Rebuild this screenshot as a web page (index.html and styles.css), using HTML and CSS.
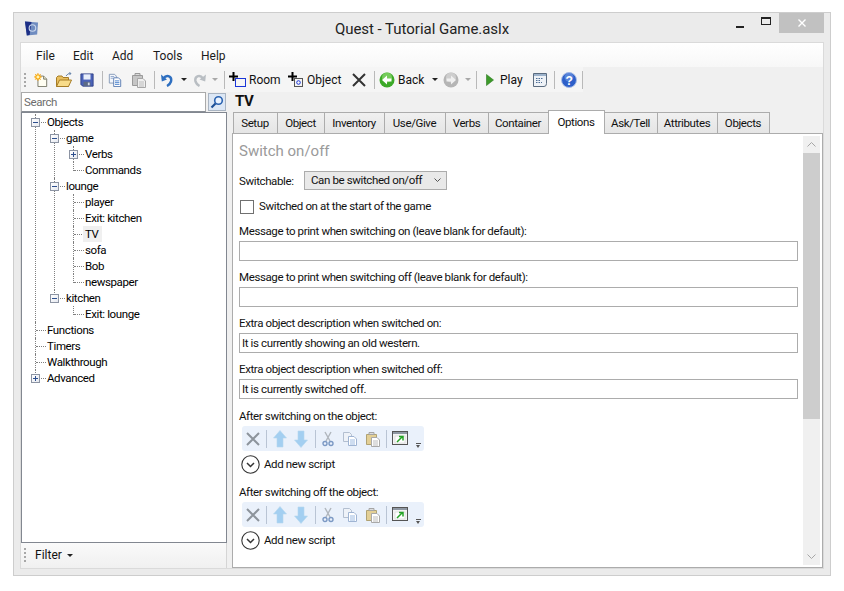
FILE: index.html
```html
<!DOCTYPE html>
<html lang="en">
<head>
<meta charset="utf-8">
<title>Quest - Tutorial Game.aslx</title>
<link rel="stylesheet" href="styles.css">
</head>
<body>
<svg class="sprite" width="0" height="0" aria-hidden="true">
  <defs>
    <symbol id="i-app" viewBox="0 0 16 16"><path d="M1 1 L15 2 L14 15 L3 16 Z" fill="#6f8cc0"/><path d="M1 1 L8 1.500 L6 15.500 L3 16 Z" fill="#1d2f86"/><circle cx="9" cy="8" r="3.500" fill="none" stroke="#c9d6ec" stroke-width="1.200"/></symbol>
    <symbol id="i-new" viewBox="0 0 16 16"><path d="M4.500 3.500H11L14.500 7V15.500H4.500Z" fill="#fffef2" stroke="#6d6d5c"/><path d="M11 3.500V7H14.500" fill="#e9e6c9" stroke="#6d6d5c"/><circle cx="4.500" cy="4.500" r="3.200" fill="#ffc21c"/><path d="M4.500 0V9M0 4.500H9M1.300 1.300L7.700 7.700M7.700 1.300L1.300 7.700" stroke="#f39a12"/><circle cx="4.500" cy="4.500" r="1.700" fill="#fff4b8"/></symbol>
    <symbol id="i-open" viewBox="0 0 16 16"><path d="M.5 14.500V5.500L2 4H6L7 5.500H12.500V14.500Z" fill="#e9bf5e" stroke="#a67c26"/><path d="M.5 14.500L3.500 8H15.500L12.500 14.500Z" fill="#f8dc8a" stroke="#a67c26"/><path d="M10 4Q11.500 1 15 1.500M15 1.500L13.300 .3M15 1.500L13.500 3" fill="none" stroke="#6a87ad"/></symbol>
    <symbol id="i-save" viewBox="0 0 16 16"><path d="M1 1H15V15H3L1 13Z" fill="#4a62b8" stroke="#2f3f86"/><rect x="4" y="1.500" width="8" height="6" fill="#e8eefa"/><rect x="4" y="10" width="8" height="5" fill="#5c6a86"/><rect x="9" y="11" width="2" height="3" fill="#d4dbea"/></symbol>
    <symbol id="i-copy" viewBox="0 0 16 16"><path d="M1.500 1.500H7.500L9.500 3.500V11.500H1.500Z" fill="#f4f7fc" stroke="#7f93b3"/><path d="M6.500 5.500H12L14.500 8V15.500H6.500Z" fill="#fff" stroke="#4f74ae"/><path d="M8 9H13M8 11H13M8 13H13" stroke="#3f79c8"/><path d="M3 4H7M3 6H6" stroke="#8aa2c8"/></symbol>
    <symbol id="i-paste-off" viewBox="0 0 16 16"><path d="M1.500 3.500H11.500V13.500H1.500Z" fill="#c6c6c6" stroke="#9a9a9a"/><path d="M4 3.500V1.500H9V3.500Z" fill="#dcdcdc" stroke="#999"/><path d="M6.500 6.500H12L14.500 9V15.500H6.500Z" fill="#efefef" stroke="#a6a6a6"/><path d="M8 10H13M8 12H13M8 14H13" stroke="#bdbdbd"/></symbol>
    <symbol id="i-undo" viewBox="0 0 12 14"><path d="M2.500 5.500Q4.500 2.500 7.500 3.200Q11 4.500 10 8.500Q9 11.500 6 13" fill="none" stroke="#2e6fc0" stroke-width="2.400"/><path d="M0 1.500L.8 8.500L6 6.500Z" fill="#2e6fc0"/></symbol>
    <symbol id="i-redo" viewBox="0 0 14 14"><path d="M11 5.500Q9 2.500 6 3.200Q2.500 4.500 3.500 8.500Q4.500 11.500 7.500 13" fill="none" stroke="#b9bec3" stroke-width="2.400"/><path d="M14 1.500L13.200 8.500L7.500 6.500Z" fill="#b9bec3"/></symbol>
    <symbol id="i-room" viewBox="0 0 17 16"><path d="M4.500 0V9M0 4.500H9" stroke="#000" stroke-width="2"/><rect x="6.500" y="6.500" width="10" height="8" fill="none" stroke="#1a35d8"/></symbol>
    <symbol id="i-obj" viewBox="0 0 17 16"><path d="M4.500 0V9M0 4.500H9" stroke="#000" stroke-width="2"/><rect x="6.500" y="6.500" width="8" height="8" fill="none" stroke="#555"/><circle cx="10.500" cy="10.500" r="1.800" fill="none" stroke="#1a35d8"/></symbol>
    <symbol id="i-x" viewBox="0 0 14 14"><path d="M1 1L13 13M13 1L1 13" stroke="#333" stroke-width="2"/></symbol>
    <symbol id="i-back" viewBox="0 0 16 16"><circle cx="8" cy="8" r="7.500" fill="#3ca928"/><circle cx="8" cy="5.500" r="5" fill="#8ddc6f" opacity=".7"/><path d="M3 8L8 3.500V6.500H12.500V9.500H8V12.500Z" fill="#fff"/></symbol>
    <symbol id="i-fwd" viewBox="0 0 16 16"><circle cx="8" cy="8" r="7.500" fill="#b5b5b5"/><circle cx="8" cy="5.500" r="5" fill="#d8d8d8" opacity=".7"/><path d="M13 8L8 3.500V6.500H3.500V9.500H8V12.500Z" fill="#f0f0f0"/></symbol>
    <symbol id="i-play" viewBox="0 0 8 12"><path d="M.5 .5L7.500 6L.5 11.500Z" fill="#3d9a2a" stroke="#2b7a20" stroke-width=".6"/></symbol>
    <symbol id="i-list" viewBox="0 0 16 16"><path d="M1.500 1.500H14.500V11.500Q14.500 14.500 12 14.500H1.500Z" fill="#eef2f7" stroke="#5b6c80"/><path d="M2 2H14V4H2Z" fill="#9db3cc"/><path d="M4 6.500H11M4 8.500H9M4 10.500H10" stroke="#4f6f96" stroke-dasharray="1.500 1"/></symbol>
    <symbol id="i-help" viewBox="0 0 16 16"><circle cx="8" cy="8" r="7.500" fill="#2d5fc9" stroke="#a9bde6"/><circle cx="8" cy="5" r="4.500" fill="#7fa6ea" opacity=".5"/><text x="8" y="12.500" text-anchor="middle" class="svg-q">?</text></symbol>
    <symbol id="i-search" viewBox="0 0 14 14"><circle cx="8.500" cy="5.500" r="3.800" fill="#eaf3ff" stroke="#2a62b0" stroke-width="1.600"/><path d="M5.500 8.500L1.500 12.500" stroke="#1c4f96" stroke-width="2.200"/></symbol>
    <symbol id="i-up" viewBox="0 0 14 18"><path d="M7 .5L13.500 8H10V17H4V8H.5Z" fill="#a3cff1" stroke="#b6d6ee" stroke-width=".6"/></symbol>
    <symbol id="i-down" viewBox="0 0 14 18"><path d="M7 17.500L13.500 10H10V1H4V10H.5Z" fill="#a3cff1" stroke="#b6d6ee" stroke-width=".6"/></symbol>
    <symbol id="i-sx" viewBox="0 0 14 14"><path d="M1 1L13 13M13 1L1 13" stroke="#8d949c" stroke-width="2"/></symbol>
    <symbol id="i-cut" viewBox="0 0 12 16"><path d="M3 1L8 10M9 1L4 10" stroke="#b0b6bd" stroke-width="1.400"/><circle cx="3" cy="12.500" r="2" fill="none" stroke="#7c99c4" stroke-width="1.400"/><circle cx="9" cy="12.500" r="2" fill="none" stroke="#7c99c4" stroke-width="1.400"/></symbol>
    <symbol id="i-scopy" viewBox="0 0 16 16"><path d="M1.500 1.500H7.500L9.500 3.500V10.500H1.500Z" fill="#eef2f8" stroke="#b3bfd0"/><path d="M6.500 5.500H12L14.500 8V14.500H6.500Z" fill="#fff" stroke="#9fb4d3"/><path d="M8 9H13M8 11H13M8 13H13" stroke="#9dbbe2"/></symbol>
    <symbol id="i-spaste" viewBox="0 0 16 16"><path d="M1.500 3.500H11.500V13.500H1.500Z" fill="#e3cf95" stroke="#b0a273"/><path d="M4 3.500V1.500H9V3.500Z" fill="#ddd" stroke="#a5a5a5"/><path d="M6.500 6.500H12L14.500 9V15.500H6.500Z" fill="#fff" stroke="#a9a9a9"/><path d="M8 10H13M8 12H13M8 14H13" stroke="#bcbcbc"/></symbol>
    <symbol id="i-win" viewBox="0 0 16 14"><rect x=".5" y=".5" width="15" height="13" fill="#f4f4f4" stroke="#555"/><rect x="1" y="1" width="14" height="2" fill="#8f98a3"/><rect x="3" y="5" width="10" height="7" fill="#fff" stroke="#c6c6c6" stroke-width=".5"/><path d="M5 11L10 6M7 5.500H11V9.500" fill="none" stroke="#26a326" stroke-width="1.500"/></symbol>
    <symbol id="i-add" viewBox="0 0 19 19"><circle cx="9.500" cy="9.500" r="8.700" fill="#fff" stroke="#333" stroke-width="1.100"/><path d="M6 8L9.500 11.500L13 8" fill="none" stroke="#333" stroke-width="1.500"/></symbol>
  </defs>
</svg>

<div class="window">
  <header class="titlebar">
    <svg class="app-icon"><use href="#i-app"/></svg>
    <div class="title">Quest - Tutorial Game.aslx</div>
    <div class="controls">
      <span class="ctl ctl-min"><span class="min-glyph"></span></span>
      <span class="ctl ctl-max"><span class="max-glyph"></span></span>
      <span class="ctl ctl-close"><svg width="8" height="8" viewBox="0 0 8 8"><path d="M.5 .5L7.500 7.500M7.500 .5L.5 7.500" stroke="#fff" stroke-width="1.400"/></svg></span>
    </div>
  </header>

  <div class="client">
    <nav class="menubar">
      <span class="menu">File</span><span class="menu">Edit</span><span class="menu">Add</span><span class="menu">Tools</span><span class="menu">Help</span>
    </nav>

    <div class="toolrow">
      <div class="toolbar">
        <span class="grip"></span>
        <svg class="ic i14 m-new"><use href="#i-new"/></svg>
        <svg class="ic m-open"><use href="#i-open"/></svg>
        <svg class="ic i14 m-save"><use href="#i-save"/></svg>
        <span class="sep m-s1"></span>
        <svg class="ic i14 m-copy"><use href="#i-copy"/></svg>
        <svg class="ic m-paste"><use href="#i-paste-off"/></svg>
        <span class="sep m-s2"></span>
        <svg class="ic i13 m-undo"><use href="#i-undo"/></svg>
        <span class="drop m-d1"></span>
        <svg class="ic i14 m-redo"><use href="#i-redo"/></svg>
        <span class="drop off m-d2"></span>
        <span class="sep m-s3"></span>
        <svg class="ic i17 m-room"><use href="#i-room"/></svg>
        <span class="tool-text m-t-room">Room</span>
        <svg class="ic i17 m-obj"><use href="#i-obj"/></svg>
        <span class="tool-text m-t-obj">Object</span>
        <svg class="ic i14 m-x"><use href="#i-x"/></svg>
        <span class="sep m-s4"></span>
        <svg class="ic m-back"><use href="#i-back"/></svg>
        <span class="tool-text m-t-back">Back</span>
        <span class="drop m-d3"></span>
        <svg class="ic m-fwd"><use href="#i-fwd"/></svg>
        <span class="drop off m-d4"></span>
        <span class="sep m-s5"></span>
        <svg class="play m-play"><use href="#i-play"/></svg>
        <span class="tool-text m-t-play">Play</span>
        <svg class="ic m-list"><use href="#i-list"/></svg>
        <span class="sep m-s6"></span>
        <svg class="ic m-help"><use href="#i-help"/></svg>
        <span class="sep m-s7"></span>
      </div>
    </div>

    <div class="body">
      <aside class="left">
        <div class="searchrow">
          <div class="searchbox">Search</div>
          <button class="searchbtn" type="button"><svg width="14" height="14"><use href="#i-search"/></svg></button>
        </div>
        <div class="tree">
          <ul class="tree-root">
            <li><div class="row"><span class="box"></span><span class="lbl">Objects</span></div>
              <ul>
                <li><div class="row"><span class="box"></span><span class="lbl">game</span></div>
                  <ul>
                    <li><div class="row"><span class="box plus"></span><span class="lbl">Verbs</span></div></li>
                    <li><div class="row"><span class="lbl">Commands</span></div></li>
                  </ul>
                </li>
                <li><div class="row"><span class="box"></span><span class="lbl">lounge</span></div>
                  <ul>
                    <li><div class="row"><span class="lbl">player</span></div></li>
                    <li><div class="row"><span class="lbl">Exit: kitchen</span></div></li>
                    <li><div class="row"><span class="lbl selected">TV</span></div></li>
                    <li><div class="row"><span class="lbl">sofa</span></div></li>
                    <li><div class="row"><span class="lbl">Bob</span></div></li>
                    <li><div class="row"><span class="lbl">newspaper</span></div></li>
                  </ul>
                </li>
                <li><div class="row"><span class="box"></span><span class="lbl">kitchen</span></div>
                  <ul>
                    <li><div class="row"><span class="lbl">Exit: lounge</span></div></li>
                  </ul>
                </li>
              </ul>
            </li>
            <li><div class="row"><span class="lbl">Functions</span></div></li>
            <li><div class="row"><span class="lbl">Timers</span></div></li>
            <li><div class="row"><span class="lbl">Walkthrough</span></div></li>
            <li><div class="row"><span class="box plus"></span><span class="lbl">Advanced</span></div></li>
          </ul>
        </div>
        <div class="filterbar">
          <span class="grip"></span>
          <span class="filter-text">Filter</span>
          <span class="drop filter-drop"></span>
        </div>
      </aside>

      <main class="right">
        <h1 class="obj-name">TV</h1>
        <div class="tabs">
          <span class="tab">Setup</span><span class="tab">Object</span><span class="tab">Inventory</span><span class="tab">Use/Give</span><span class="tab">Verbs</span><span class="tab">Container</span><span class="tab active">Options</span><span class="tab">Ask/Tell</span><span class="tab">Attributes</span><span class="tab">Objects</span>
        </div>
        <div class="panel">
          <div class="content">
            <h2 class="section">Switch on/off</h2>
            <div class="switch-row">
              <span class="switch-label">Switchable:</span>
              <div class="select"><span>Can be switched on/off</span><svg class="chev" width="7" height="5" viewBox="0 0 7 5"><path d="M.5 .5L3.500 3.500L6.500 .5" fill="none" stroke="#555"/></svg></div>
            </div>
            <div class="check-row"><span class="checkbox"></span><span>Switched on at the start of the game</span></div>
            <div class="field"><div class="flabel">Message to print when switching on (leave blank for default):</div><div class="input"></div></div>
            <div class="field"><div class="flabel">Message to print when switching off (leave blank for default):</div><div class="input"></div></div>
            <div class="field"><div class="flabel">Extra object description when switched on:</div><div class="input">It is currently showing an old western.</div></div>
            <div class="field"><div class="flabel">Extra object description when switched off:</div><div class="input">It is currently switched off.</div></div>

            <div class="script">
              <div class="flabel">After switching on the object:</div>
              <div class="script-bar">
                <svg class="s-x"><use href="#i-sx"/></svg><span class="s-sep s-sep1"></span>
                <svg class="s-arrow s-up"><use href="#i-up"/></svg><svg class="s-arrow s-down"><use href="#i-down"/></svg><span class="s-sep s-sep2"></span>
                <svg class="s-cut"><use href="#i-cut"/></svg><svg class="s-ic s-copy"><use href="#i-scopy"/></svg><svg class="s-ic s-paste"><use href="#i-spaste"/></svg><span class="s-sep s-sep3"></span>
                <svg class="s-ic s-win"><use href="#i-win"/></svg><span class="s-more"></span>
              </div>
              <div class="add-row"><svg class="add-ic"><use href="#i-add"/></svg><span class="add-text">Add new script</span></div>
            </div>
            <div class="script">
              <div class="flabel">After switching off the object:</div>
              <div class="script-bar">
                <svg class="s-x"><use href="#i-sx"/></svg><span class="s-sep s-sep1"></span>
                <svg class="s-arrow s-up"><use href="#i-up"/></svg><svg class="s-arrow s-down"><use href="#i-down"/></svg><span class="s-sep s-sep2"></span>
                <svg class="s-cut"><use href="#i-cut"/></svg><svg class="s-ic s-copy"><use href="#i-scopy"/></svg><svg class="s-ic s-paste"><use href="#i-spaste"/></svg><span class="s-sep s-sep3"></span>
                <svg class="s-ic s-win"><use href="#i-win"/></svg><span class="s-more"></span>
              </div>
              <div class="add-row"><svg class="add-ic"><use href="#i-add"/></svg><span class="add-text">Add new script</span></div>
            </div>
          </div>
          <div class="scrollbar">
            <div class="sb-btn"><svg width="9" height="5" viewBox="0 0 9 5"><path d="M.5 4.500L4.500 .5L8.500 4.500" fill="none" stroke="#a6a6a6"/></svg></div>
            <div class="sb-thumb"></div>
            <div class="sb-track"></div>
            <div class="sb-btn"><svg width="9" height="5" viewBox="0 0 9 5"><path d="M.5 .5L4.500 4.500L8.500 .5" fill="none" stroke="#a6a6a6"/></svg></div>
          </div>
        </div>
      </main>
    </div>
  </div>
</div>
</body>
</html>
```

FILE: styles.css
```css
* { box-sizing: border-box; }
html, body { margin: 0; padding: 0; background: #fff; }
body { width: 844px; height: 591px; overflow: hidden; font: 11.5px/16px Roboto, "Liberation Sans", sans-serif; letter-spacing: -.38px; color: #000; }
.sprite { position: absolute; }
ul { list-style: none; margin: 0; padding: 0; }
h1, h2 { margin: 0; font-weight: normal; }

.window { width: 818px; height: 564px; margin: 12px 0 0 13px; border: 1px solid #cdcdcd; background: #ebebeb; display: flex; flex-direction: column; }
.titlebar { height: 29px; flex: none; display: flex; position: relative; }
.app-icon { width: 15px; height: 16px; margin: 7px 0 0 10px; }
.title { position: absolute; left: 0; right: 0; top: 6px; text-align: center; font-size: 15px; line-height: 20px; letter-spacing: -.03px; color: #222; }
.controls { margin-left: auto; margin-right: 6px; display: flex; height: 20px; }
.ctl { display: flex; align-items: center; justify-content: center; }
.ctl-min { width: 26px; }
.ctl-max { width: 26px; }
.ctl-close { width: 45px; background: #c1c1c1; }
.min-glyph { width: 8px; height: 2px; background: #222; margin-top: 8px; }
.max-glyph { width: 10px; height: 8px; border: 1px solid #222; border-top-width: 2px; margin-top: -5px; }

.client { flex: 1; margin: 0 6px 6px; border: 1px solid #dadada; background: #f0f0f0; display: flex; flex-direction: column; min-height: 0; }
.menubar { height: 24px; flex: none; display: flex; align-items: center; padding: 1px 0 0 15px; background: linear-gradient(#fff, #f9f9f9 80%, #f7f7f7); font-size: 12px; letter-spacing: 0; color: #1a1a1a; }
.menu { width: 39px; }
.menu:nth-child(1) { width: 37px; }
.menu:nth-child(3) { width: 41px; }
.menu:nth-child(4) { width: 48px; }

.toolrow { height: 25px; flex: none; display: flex; background: #f0f0f0; }
.toolbar { width: 562px; height: 25px; display: flex; align-items: center; background: #f5f5f5; }
.grip { width: 2px; height: 14px; margin-left: 3px; background: repeating-linear-gradient(#a8a8a8 0 2px, transparent 2px 4px); flex: none; }
.ic { width: 16px; height: 16px; flex: none; }
.i14 { width: 14px; height: 14px; }
.i13 { width: 12px; height: 14px; }
.i17 { width: 17px; height: 16px; }
.play { width: 8px; height: 12px; flex: none; }
.sep { width: 1px; height: 18px; background: #b9b9b9; flex: none; }
.drop { width: 0; height: 0; border-left: 3px solid transparent; border-right: 3px solid transparent; border-top: 3px solid #222; flex: none; }
.drop.off { border-top-color: #a8a8a8; }
.tool-text { font-size: 12px; letter-spacing: 0; color: #111; flex: none; }
.m-new { margin-left: 8px; } .m-open { margin-left: 8px; } .m-save { margin-left: 8px; }
.m-s1 { margin-left: 8px; } .m-copy { margin-left: 5px; } .m-paste { margin-left: 9px; }
.m-s2 { margin-left: 7px; } .m-undo { margin-left: 6px; } .m-d1 { margin-left: 8px; }
.m-redo { margin-left: 5px; } .m-d2 { margin-left: 6px; } .m-s3 { margin-left: 6px; }
.m-room { margin-left: 4px; } .m-t-room { margin-left: 3px; width: 39px; }
.m-t-obj { margin-left: 2px; width: 45px; }
.m-s4 { margin-left: 8px; } .m-back { margin-left: 4px; }
.m-t-back { margin-left: 3px; width: 34px; } .m-fwd { margin-left: 5px; }
.m-d4 { margin-left: 6px; } .m-s5 { margin-left: 5px; } .m-play { margin-left: 9px; }
.m-t-play { margin-left: 6px; width: 32px; } .m-s6 { margin-left: 6px; }
.m-help { margin-left: 6px; } .m-s7 { margin-left: 5px; }
.svg-q { font: bold 12px "Liberation Sans", sans-serif; fill: #fff; }

.body { flex: 1; display: flex; min-height: 0; }
.left { width: 206px; flex: none; display: flex; flex-direction: column; }
.searchrow { height: 20px; flex: none; display: flex; gap: 2px; }
.searchbox { width: 185px; height: 20px; background: #fff; border: 1px solid #aaa; border-bottom-color: #8a8f96; padding-left: 2px; line-height: 19px; color: #6d6d6d; }
.searchbtn { width: 18px; height: 18px; padding: 0; margin-top: 1px; background: #dce7f5; border: 1px solid #a9b4c2; display: flex; align-items: center; justify-content: center; }
.searchbtn svg { display: block; }

.tree { flex: 1; width: 206px; background: #fff; border: 1px solid #828790; padding-top: 1px; overflow: hidden; }
.tree-root { margin-left: 13px; }
.tree li { position: relative; }
.tree li::before { content: ""; position: absolute; left: 0; top: 0; bottom: 0; border-left: 1px dotted #808080; }
.tree li:last-child::before { bottom: auto; height: 9px; }
.tree li ul { padding-left: 19px; }
.row { height: 16px; padding-left: 11px; display: flex; position: relative; }
.row::before { content: ""; position: absolute; left: 1px; top: 8px; width: 10px; border-top: 1px dotted #808080; }
.lbl { padding: 0 2px 0 1px; height: 16px; position: relative; white-space: nowrap; }
.lbl.selected { background: #f0f0f0; padding: 0 3px 0 2px; margin-left: -1px; }
.box { position: absolute; z-index: 1; left: -4px; top: 4px; width: 9px; height: 9px; background: linear-gradient(135deg, #fff, #e6e9f0); border: 1px solid #8c94a3; }
.box::before { content: ""; position: absolute; left: 1px; top: 3px; width: 5px; height: 1px; background: #2d4f8e; }
.box.plus::after { content: ""; position: absolute; left: 3px; top: 1px; width: 1px; height: 5px; background: #2d4f8e; }

.filterbar { height: 25px; flex: none; display: flex; align-items: center; background: linear-gradient(#fafafa, #f0f0f0); border-right: 1px solid #d5d5d5; padding-bottom: 1px; }
.filter-text { margin-left: 9px; font-size: 12px; letter-spacing: 0; color: #111; width: 30px; }
.filter-drop { margin-left: 2px; }

.right { flex: 1; margin-left: 5px; display: flex; flex-direction: column; min-width: 0; }
.obj-name { height: 18px; flex: none; padding-left: 3px; font-size: 15px; font-weight: bold; line-height: 19px; letter-spacing: -.3px; color: #111; }
.tabs { height: 23px; flex: none; padding-left: 2px; display: grid; grid-template-columns: 44px 47px 60px 61px 43px 60px 56px 53px 60px 52px; align-items: end; position: relative; z-index: 1; }
.tab { height: 21px; text-align: center; padding-right: 1px; line-height: 20px; background: linear-gradient(#f0f0f0, #e5e5e5); border: 1px solid #acacac; border-bottom: 0; margin-left: -1px; white-space: nowrap; color: #111; }
.tab.active { height: 24px; margin-bottom: -1px; line-height: 23px; background: #fff; position: relative; z-index: 1; }

.panel { flex: 1; background: #fff; border: 1px solid #acacac; display: flex; min-height: 0; }
.content { flex: 1; min-width: 0; padding: 6px 5px 0 6px; overflow: hidden; color: #111; }
.section { height: 22px; font-size: 15px; line-height: 22px; letter-spacing: 0; color: #9a9a9a; }
.switch-row { margin-top: 9px; height: 19px; display: flex; align-items: center; }
.switch-label { width: 65px; }
.select { width: 143px; height: 19px; background: #e9e9e9; border: 1px solid #acacac; padding-left: 6px; line-height: 17px; display: flex; align-items: center; white-space: nowrap; }
.chev { margin-left: auto; margin-right: 5px; }
.check-row { margin-top: 8px; height: 16px; display: flex; align-items: center; gap: 5px; }
.checkbox { width: 14px; height: 14px; margin: 1px 0 0 1px; background: #fff; border: 1px solid #707070; flex: none; }
.field { margin-top: 8px; }
.check-row + .field { margin-top: 9px; }
.flabel { height: 16px; margin-bottom: 2px; line-height: 17px; white-space: nowrap; }
.input { height: 20px; border: 1px solid #acacac; background: #fff; padding-left: 2px; line-height: 19px; white-space: nowrap; }
.script { margin-top: 9px; }
.script + .script { margin-top: 10px; }
.script-bar { width: 182px; height: 25px; margin-left: 3px; background: #eaf1fb; border-radius: 3px; display: flex; align-items: center; }
.s-x { width: 14px; height: 14px; margin-left: 4px; flex: none; }
.s-sep { width: 1px; height: 18px; background: #b9c4d4; flex: none; }
.s-sep1 { margin-left: 6px; }
.s-arrow { width: 14px; height: 18px; flex: none; }
.s-up { margin-left: 6px; }
.s-down { margin-left: 7px; }
.s-sep2 { margin-left: 7px; }
.s-cut { width: 12px; height: 16px; flex: none; margin-left: 6px; }
.s-ic { width: 16px; height: 16px; flex: none; }
.s-copy { margin-left: 8px; }
.s-paste { margin-left: 7px; }
.s-sep3 { margin-left: 5px; }
.s-win { height: 14px; margin-left: 5px; margin-top: -2px; }
.s-more { width: 5px; height: 4px; margin-left: 8px; margin-top: 12px; border-top: 1px solid #555; position: relative; flex: none; }
.s-more::after { content: ""; position: absolute; left: 0; top: 1px; border-left: 2.5px solid transparent; border-right: 2.5px solid transparent; border-top: 3px solid #555; }
.add-row { margin: 4px 0 0 2px; height: 19px; display: flex; align-items: center; gap: 4px; }
.add-ic { width: 19px; height: 19px; flex: none; }
.add-text { margin-top: -2px; }

.scrollbar { width: 17px; flex: none; margin: 2px 2px 2px 0; background: #f0f0f0; display: flex; flex-direction: column; }
.sb-btn { height: 17px; flex: none; display: flex; align-items: center; justify-content: center; }
.sb-thumb { height: 266px; flex: none; background: #cdcdcd; }
.sb-track { flex: 1; }
```
